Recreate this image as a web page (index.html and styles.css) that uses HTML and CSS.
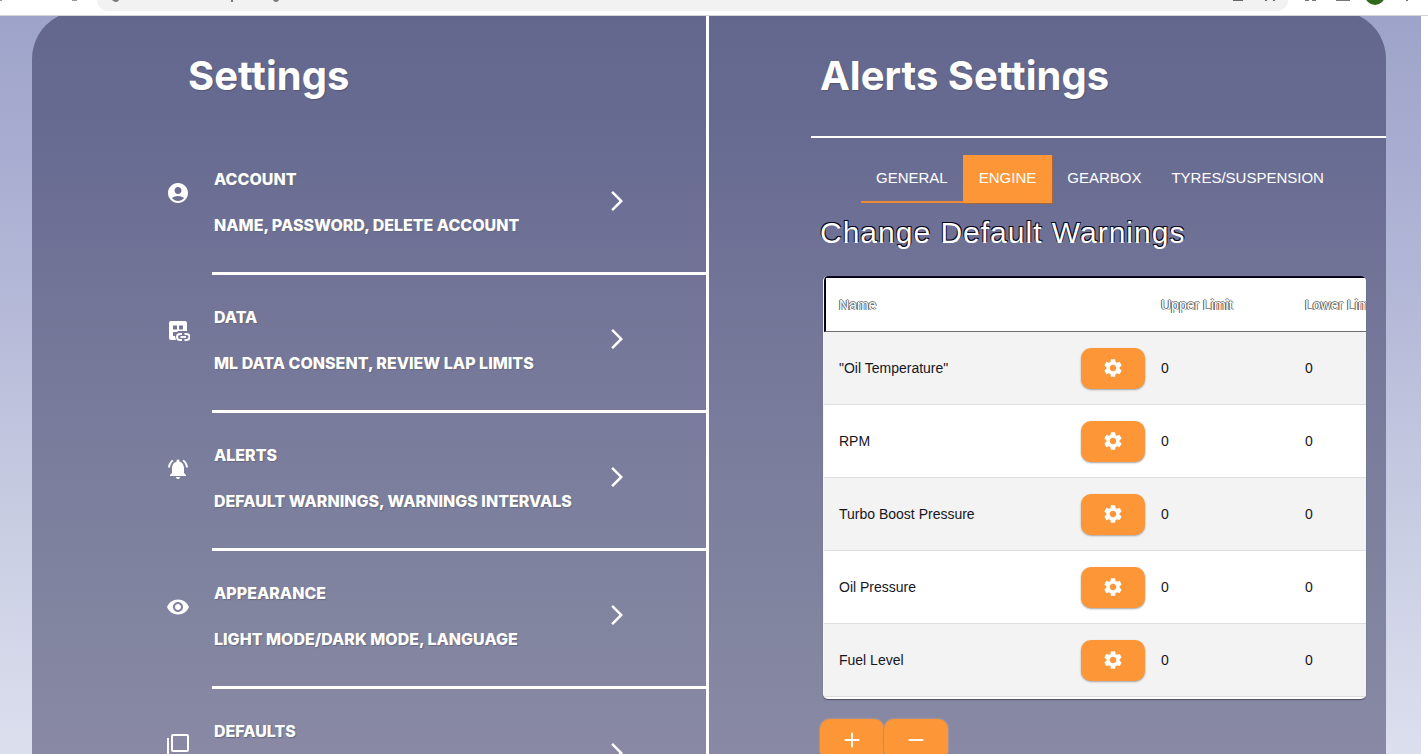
FILE: index.html
```html
<!DOCTYPE html>
<html lang="en">
<head>
<meta charset="utf-8">
<title>Settings</title>
<link rel="stylesheet" href="styles.css">
</head>
<body>
<svg class="sprite" aria-hidden="true">
  <symbol id="gear" viewBox="0 0 24 24"><path d="M19.14 12.94c.04-.3.06-.61.06-.94 0-.32-.02-.64-.07-.94l2.03-1.58c.18-.14.23-.41.12-.61l-1.92-3.32c-.12-.22-.37-.29-.59-.22l-2.39.96c-.5-.38-1.03-.7-1.62-.94l-.36-2.54c-.04-.24-.24-.41-.48-.41h-3.84c-.24 0-.43.17-.47.41l-.36 2.54c-.59.24-1.13.57-1.62.94l-2.39-.96c-.22-.08-.47 0-.59.22L2.74 8.87c-.12.21-.08.47.12.61l2.03 1.58c-.05.3-.09.63-.09.94s.02.64.07.94l-2.03 1.58c-.18.14-.23.41-.12.61l1.92 3.32c.12.22.37.29.59.22l2.39-.96c.5.38 1.03.7 1.62.94l.36 2.54c.05.24.24.41.48.41h3.84c.24 0 .44-.17.47-.41l.36-2.54c.59-.24 1.13-.56 1.62-.94l2.39.96c.22.08.47 0 .59-.22l1.92-3.32c.12-.22.07-.47-.12-.61l-2.01-1.58zM12 15.6c-1.98 0-3.6-1.62-3.6-3.6s1.62-3.6 3.6-3.6 3.6 1.62 3.6 3.6-1.62 3.6-3.6 3.6z"/></symbol>
  <symbol id="next" viewBox="0 0 24 24"><path d="M6.23 20.23 8 22l10-10L8 2 6.23 3.77 14.46 12z"/></symbol>
</svg>
<header class="toolbar" aria-hidden="true">
  <svg class="toolbar-left" viewBox="0 0 97 15"><path d="M0 0h2v1H0zM72 0h5v1h-5z" fill="#999"/></svg>
  <div class="address">
    <svg class="address-left" viewBox="0 0 200 12"><path d="M15 0h7q-1 2-3 2t-4-2zM134 0h2v2h-2zM176 0h6q-1 2-3 2t-3-2z" fill="#777"/></svg>
    <svg class="address-right" viewBox="0 0 60 12"><path d="M5 0h10v1H5zM37 0h2v1h-2zM45 0h2v1h-2z" fill="#666"/></svg>
  </div>
  <svg class="toolbar-right" viewBox="0 0 140 15"><path d="M17 0h4v1h-4zM24 0h4v1h-4zM48 0h14v1H48zM118 0h2v1h-2z" fill="#777"/><circle cx="87" cy="-5" r="10" fill="#30691c"/></svg>
</header>
<main class="page">
  <div class="panel">
    <section class="menu">
      <h1 class="title menu-title">Settings</h1>
      <nav>
        <a class="item" href="#account">
          <svg class="icon" viewBox="0 0 24 24"><path d="M12 2C6.48 2 2 6.48 2 12s4.48 10 10 10 10-4.480 10-10S17.520 2 12 2zm0 4c1.930 0 3.500 1.570 3.500 3.500S13.930 13 12 13s-3.500-1.570-3.500-3.500S10.070 6 12 6zm0 14c-2.030 0-4.430-.82-6.140-2.880C7.550 15.800 9.680 15 12 15s4.450.8 6.140 2.120C16.430 19.180 14.030 20 12 20z"/></svg>
          <span class="item-body"><span class="item-text"><span>ACCOUNT</span><span>NAME, PASSWORD, DELETE ACCOUNT</span></span><svg class="chevron"><use href="#next"/></svg></span>
        </a>
        <a class="item" href="#data">
          <svg class="icon" viewBox="0 0 24 24"><path fill-rule="evenodd" d="M5 2h14a2 2 0 0 1 2 2v8h-9.500v1H7v4h2l1 4H5a2 2 0 0 1-2-2V4a2 2 0 0 1 2-2zM7 6.500v4h4v-4zM13 6.500v4h4v-4z"/><path d="M16 15h-2a3 3 0 0 0 0 6h2M18.500 15h2a3 3 0 0 1 0 6h-2M14.500 18H20" fill="none" stroke="#fff" stroke-width="2"/></svg>
          <span class="item-body"><span class="item-text"><span>DATA</span><span>ML DATA CONSENT, REVIEW LAP LIMITS</span></span><svg class="chevron"><use href="#next"/></svg></span>
        </a>
        <a class="item" href="#alerts">
          <svg class="icon" viewBox="0 0 24 24"><path d="M7.580 4.080 6.150 2.650C3.750 4.480 2.170 7.300 2.030 10.500h2c.15-2.650 1.510-4.970 3.550-6.420zm12.390 6.420h2c-.15-3.200-1.730-6.020-4.120-7.850l-1.420 1.430c2.020 1.450 3.390 3.770 3.540 6.420zM18 11c0-3.070-1.640-5.640-4.500-6.320V4c0-.83-.67-1.500-1.500-1.500s-1.500.67-1.500 1.500v.68C7.630 5.360 6 7.920 6 11v5l-2 2v1h16v-1l-2-2v-5zm-6 11c.14 0 .27-.01.4-.04.65-.14 1.180-.58 1.440-1.180.1-.24.15-.5.15-.78h-4c.01 1.100.9 2 2.010 2z"/></svg>
          <span class="item-body"><span class="item-text"><span>ALERTS</span><span>DEFAULT WARNINGS, WARNINGS INTERVALS</span></span><svg class="chevron"><use href="#next"/></svg></span>
        </a>
        <a class="item" href="#appearance">
          <svg class="icon" viewBox="0 0 24 24"><path d="M12 4.500C7 4.500 2.730 7.610 1 12c1.730 4.390 6 7.500 11 7.500s9.270-3.110 11-7.500c-1.730-4.390-6-7.500-11-7.500zM12 17c-2.760 0-5-2.240-5-5s2.240-5 5-5 5 2.240 5 5-2.240 5-5 5zm0-8c-1.660 0-3 1.340-3 3s1.340 3 3 3 3-1.340 3-3-1.340-3-3-3z"/></svg>
          <span class="item-body"><span class="item-text"><span>APPEARANCE</span><span>LIGHT MODE/DARK MODE, LANGUAGE</span></span><svg class="chevron"><use href="#next"/></svg></span>
        </a>
        <a class="item" href="#defaults">
          <svg class="icon" viewBox="0 0 24 24"><path d="M3 5H1v16c0 1.100.9 2 2 2h16v-2H3V5zm18-4H7c-1.100 0-2 .9-2 2v14c0 1.100.9 2 2 2h14c1.100 0 2-.9 2-2V3c0-1.100-.9-2-2-2zm0 16H7V3h14v14z"/></svg>
          <span class="item-body"><span class="item-text"><span>DEFAULTS</span></span><svg class="chevron"><use href="#next"/></svg></span>
        </a>
      </nav>
    </section>
    <section class="alerts">
      <h2 class="title alerts-title">Alerts Settings</h2>
      <div class="tabs" role="tablist">
        <button class="tab moving" role="tab">GENERAL</button>
        <button class="tab selected" role="tab" aria-selected="true">ENGINE</button>
        <button class="tab" role="tab">GEARBOX</button>
        <button class="tab" role="tab">TYRES/SUSPENSION</button>
      </div>
      <h3 class="subtitle">Change Default Warnings</h3>
      <div class="table-card">
        <table>
          <colgroup><col class="col-name"><col class="col-edit"><col class="col-limit"><col class="col-limit"></colgroup>
          <thead><tr><th>Name</th><th></th><th>Upper Limit</th><th>Lower Limit</th></tr></thead>
          <tbody>
            <tr><td>"Oil Temperature"</td><td><button class="action" aria-label="Edit"><svg class="gear"><use href="#gear"/></svg></button></td><td>0</td><td>0</td></tr>
            <tr><td>RPM</td><td><button class="action" aria-label="Edit"><svg class="gear"><use href="#gear"/></svg></button></td><td>0</td><td>0</td></tr>
            <tr><td>Turbo Boost Pressure</td><td><button class="action" aria-label="Edit"><svg class="gear"><use href="#gear"/></svg></button></td><td>0</td><td>0</td></tr>
            <tr><td>Oil Pressure</td><td><button class="action" aria-label="Edit"><svg class="gear"><use href="#gear"/></svg></button></td><td>0</td><td>0</td></tr>
            <tr><td>Fuel Level</td><td><button class="action" aria-label="Edit"><svg class="gear"><use href="#gear"/></svg></button></td><td>0</td><td>0</td></tr>
          </tbody>
        </table>
      </div>
      <div class="buttons">
        <button class="action" aria-label="Add"><svg class="sign" viewBox="0 0 24 24"><path d="M20 13h-7v7h-2v-7H4v-2h7V4h2v7h7z"/></svg></button>
        <button class="action" aria-label="Remove"><svg class="sign" viewBox="0 0 24 24"><path d="M20 13H4v-2h16z"/></svg></button>
      </div>
    </section>
  </div>
</main>
</body>
</html>
```
FILE: styles.css
```css
* { box-sizing: border-box; }

body {
  margin: 0;
  height: 100vh;
  display: flex;
  flex-direction: column;
  overflow: hidden;
  background: #fff;
  font-family: "Liberation Sans", Arial, sans-serif;
}

svg { fill: #fff; display: block; flex: none; }
.sprite { display: none; }

/* Browser toolbar */
.toolbar {
  flex: none;
  display: flex;
  height: 16px;
  border-bottom: 1px solid #d5d5d8;
}
.toolbar-left { width: 97px; height: 15px; }
.toolbar-right { width: 140px; height: 15px; }
.address {
  flex: 1;
  display: flex;
  justify-content: space-between;
  height: 11px;
  border-radius: 0 0 16px 16px;
  background: #f2f2f3;
}
.address-left { width: 200px; height: 12px; }
.address-right { width: 60px; height: 12px; }

/* Page */
.page {
  flex: 1;
  min-height: 0;
  margin-right: 7px;
  padding: 0 35px 0 32px;
  overflow: hidden;
  background: linear-gradient(#9ea4c9, #a8acd0 18%, #b7bbd9 42%, #cbcfe3 72%, #dcdfee);
}
.panel {
  display: grid;
  grid-template-columns: minmax(0, 1fr) minmax(0, 1fr);
  margin-top: -5px;
  border-radius: 48px 48px 0 0;
  background: linear-gradient(#63678e, #686b91 15%, #737698 37%, #8285a0 75%, #8989a5 91%);
}
.title {
  margin: 0;
  color: #fff;
  font: 700 40px/48px Inter, sans-serif;
  text-shadow: 1px 1px 1px #55566f;
}

/* Menu column */
.menu { border-right: 3px solid #fff; }
.menu-title { padding: 41px 0 0 156px; }
.menu nav { padding: 37px 0 0 134px; }
.item {
  display: flex;
  height: 138px;
  color: #fff;
  font: 800 16px/20px Inter, sans-serif;
  text-decoration: none;
}
.icon {
  width: 24px;
  height: 24px;
  margin: 44px 22px 0 0;
}
.item-body {
  flex: 1;
  display: flex;
  justify-content: space-between;
  padding: 32px 77px 0 2px;
  border-bottom: 3px solid #fff;
}
.item-text {
  display: flex;
  flex-direction: column;
  gap: 26px;
  text-shadow: 1px 1px 1px #666981;
}
.chevron {
  width: 24px;
  height: 24px;
  margin-top: 20px;
}

/* Alerts column */
.alerts { padding-left: 102px; }
.alerts-title {
  padding: 41px 0 36px 9px;
  border-bottom: 2px solid #fff;
}
.tabs {
  display: flex;
  padding: 17px 0 0 50px;
}
.tab {
  height: 48px;
  padding: 0 15px;
  border: 0;
  border-bottom: 2px solid transparent;
  background: none;
  color: #fff;
  font: 15px/20px "Liberation Sans", Arial, sans-serif;
}
.moving { border-color: #ee8a36; }
.selected {
  padding: 0 16px;
  border-color: #fc9636;
  background: #fc9636;
  box-shadow: 1px 1px 0 #a9683b;
}
.subtitle {
  margin: 0;
  padding: 12px 0 0 9px;
  color: #fff;
  font-size: 30px;
  font-weight: 400;
  line-height: 36px;
  letter-spacing: 1px;
  text-shadow: -1px -1px #05051c, 1px -1px #05051c;
}

.table-card {
  margin: 25px 20px 0 12px;
  padding-bottom: 2px;
  overflow: hidden;
  border-left: 1px solid #f8f8f8;
  border-radius: 5px;
  background: #fff;
  box-shadow: 0 1px 1px #4d4e5d;
}
table {
  width: 610px;
  table-layout: fixed;
  border-collapse: separate;
  border-spacing: 0;
  color: #16161e;
  font-size: 14px;
  line-height: 20px;
}
.col-name { width: 241px; }
.col-edit { width: 81px; }
.col-limit { width: 144px; }
th, td {
  padding: 0 16px 0 15px;
  text-align: left;
  font-weight: 400;
}
th {
  height: 56px;
  border-top: 2px solid #05051c;
  border-bottom: 1px solid #6d6d6d;
  color: #fff;
  text-shadow: -1px 0 #555, 1px 0 #777, 0 -1px #888;
}
th:first-child { border-left: 2px solid #05051c; padding-left: 13px; }
td { height: 73px; border-bottom: 1px solid #dedee0; }
tbody tr:nth-child(odd) { background: #f3f3f3; }

.action {
  display: flex;
  align-items: center;
  justify-content: center;
  width: 64px;
  height: 41px;
  padding: 0;
  border: 0;
  border-radius: 10px;
  background: #fc9636;
  box-shadow: 0 1px 2px #a5a2a2;
}
td .action { margin-left: 1px; }
.gear { width: 22px; height: 22px; }
.sign { width: 22px; height: 22px; }
.buttons {
  display: flex;
  padding: 20px 0 0 9px;
}
.buttons .action { box-shadow: 0 0 1px 1px #a49494; }
```
